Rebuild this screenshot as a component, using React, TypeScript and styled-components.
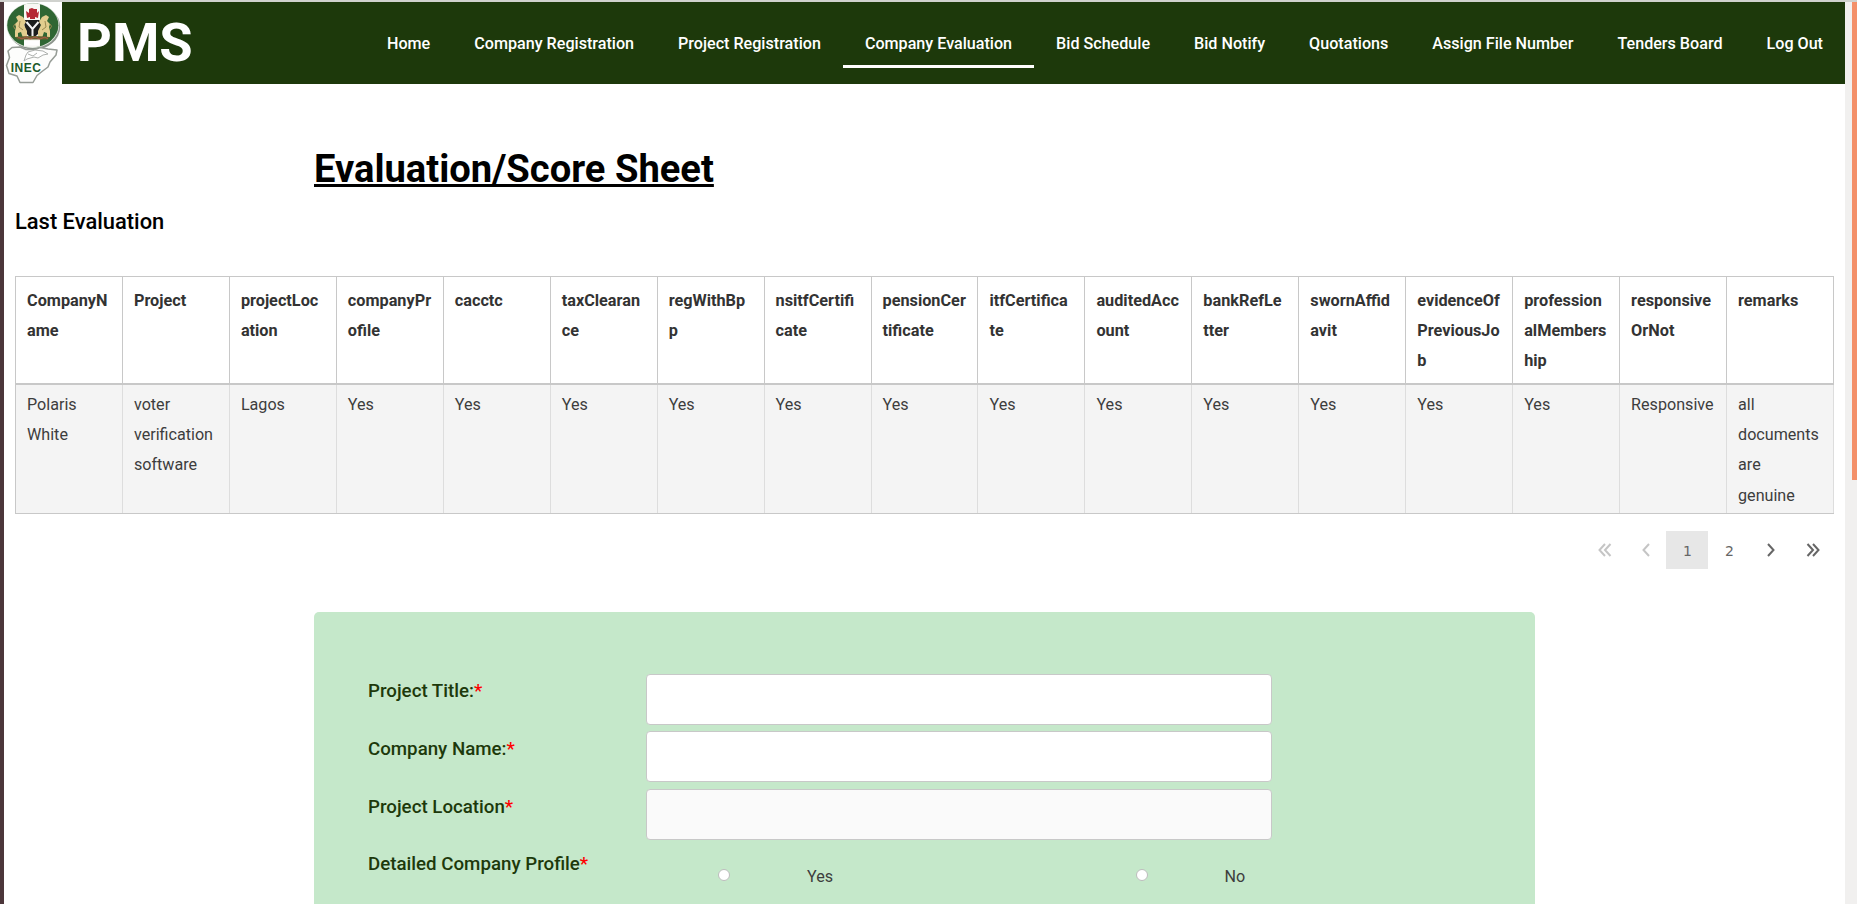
import React from "react";
import styled, { createGlobalStyle } from "styled-components";

const Global = createGlobalStyle`
  *, *::before, *::after { box-sizing: border-box; }
  body { margin: 0; background: #fff; overflow: hidden; font-family: Roboto, "Liberation Sans", sans-serif; font-size: 16.14px; color: #3d3d3d; }
`;

const Window = styled.div`
  display: flex;
  height: 904px;
  overflow: hidden;
  border-top: 2px solid #d0d2ce;
`;
const DesktopEdge = styled.div`
  flex: 0 0 4px;
  background: #4c363a;
`;
const Page = styled.div`
  flex: 1;
  min-width: 0;
  display: flex;
  flex-direction: column;
`;
const ScrollTrack = styled.div`
  flex: 0 0 12px;
  padding-left: 7px;
  background: #f1f0ef;
`;
const ScrollThumb = styled.div`
  height: 478px;
  background: #f39069;
`;

const Header = styled.header`
  display: flex;
  flex: 0 0 82px;
  background: #1d390b;
`;
const LogoBox = styled.div`
  width: 58px;
  background: #fff;
  svg { display: block; }
`;
const Brand = styled.div`
  padding-left: 15px;
  font-size: 54.2px;
  line-height: 81px;
  font-weight: 700;
  color: #fff;
`;
const Nav = styled.nav`
  display: flex;
  align-items: flex-start;
  margin-left: auto;
  padding-top: 18px;
`;
const NavItem = styled.a<{ $active?: boolean }>`
  height: 48px;
  padding: 0 22px;
  line-height: 47px;
  font-weight: 500;
  color: #fff;
  white-space: nowrap;
  border-bottom: 3px solid ${(p) => (p.$active ? "#fff" : "transparent")};
`;

const Title = styled.h1`
  margin: 61px 0 0 310px;
  font-size: 38.15px;
  line-height: 48px;
  font-weight: 700;
  color: #000;
  text-decoration: underline;
`;
const Subtitle = styled.h2`
  margin: 7px 0 0 11px;
  font-size: 21.9px;
  line-height: 44px;
  font-weight: 500;
  color: #000;
`;
const Table = styled.div`
  margin: 32px 11px 0;
  border: 1px solid #c8c8c8;
  border-right: 0;
`;
const HeadRow = styled.div`
  display: grid;
  grid-template-columns: repeat(17, minmax(0, 1fr));
  height: 108px;
  border-bottom: 2px solid #c8c8c8;
`;
const BodyRow = styled(HeadRow)`
  height: 128px;
  border-bottom: 0;
  background: #f4f4f4;
`;
const HeadCell = styled.div`
  padding: 9px 0 0 11px;
  font-size: 16.25px;
  line-height: 30.2px;
  font-weight: 700;
  color: #333;
  white-space: pre;
  border-right: 1px solid #c8c8c8;
`;
const Cell = styled.div`
  padding: 5px 0 0 11px;
  line-height: 30.2px;
  white-space: pre;
  border-right: 1px solid #dddddd;
`;

const Pager = styled.div`
  display: flex;
  height: 38px;
  margin: 17px 11px 0;
  justify-content: flex-end;
`;
const PageButton = styled.button<{ $active?: boolean; $muted?: boolean; $inset?: number }>`
  display: flex;
  align-items: center;
  justify-content: center;
  width: 42px;
  height: 38px;
  padding: 0 0 0 ${(p) => p.$inset ?? 0}px;
  border: 0;
  background: ${(p) => (p.$active ? "#e7e7e7" : "transparent")};
  color: ${(p) => (p.$muted ? "#c5c5c5" : "#666")};
`;
const PageNumber = styled.span`
  padding: 2px 0 0 1px;
  font: 14px "DejaVu Sans", sans-serif;
`;

const Form = styled.form`
  flex: 0 0 500px;
  width: 1221px;
  margin: 43px 0 0 310px;
  padding: 61.7px 54px 0;
  border-radius: 5px;
  background: #c5e8ca;
`;
const Field = styled.div`
  display: flex;
  height: 57.6px;
`;
const Label = styled.label`
  width: 278px;
  padding-top: 3.7px;
  font-size: 18.72px;
  line-height: 28px;
  font-weight: 500;
  color: #1d390b;
  white-space: nowrap;
`;
const Star = styled.span`
  color: #f00;
`;
const Input = styled.input`
  width: 626px;
  height: 51px;
  padding: 0 12px;
  border: 1px solid #c8c8c8;
  border-radius: 4px;
  background: #fff;
  &:disabled { background: #fafafa; }
`;
const Choice = styled.label`
  display: flex;
  width: 417.5px;
  padding-left: 72px;
  padding-top: 15.8px;
  line-height: 30px;
`;
const Radio = styled.span`
  width: 12px;
  height: 12px;
  margin: 7px 77px 0 0;
  border: 1px solid #bdbdbd;
  border-radius: 50%;
  background: #fff;
`;

const Logo = () => (
  <svg width="58" height="82" viewBox="4 2 58 82">
    <ellipse cx="34" cy="27" rx="26.2" ry="22.6" fill="#8c948c" />
    <ellipse cx="32.8" cy="25.4" rx="26.3" ry="22.6" fill="#dfe6de" />
    <ellipse cx="32.8" cy="25.2" rx="25.6" ry="21.9" fill="#2f6633" />
    <path d="M24 4.4Q32 2.4 40 4.2V46.4Q32 48 24 46.4Z" fill="#f8f8f4" />
    <path d="M27 18l-1-7 3 2 0-4 3-1 2 1 3 0 0 4 2-2-1 7-3-1v2h-5v-2Z" fill="#b52733" />
    <path d="M25 20h14l2 2-1 8q-2 6-8 8-5-2-7-8l-1-8Z" fill="#1c1e1d" />
    <path d="M26.5 22l6 7 6-7M32.5 28v9" fill="none" stroke="#f5f5f5" strokeWidth="2" />
    <path d="M16 17l3-2 4 2 3 5-2 3 3 6 0 7h-4l-2-6-3 1 0 4h-3l0-6 1-4-1-3 3-3Z" fill="#e2cd8e" />
    <path d="M49 17l-3-2-4 2-3 5 2 3-3 6 0 7h4l2-6 3 1 0 4h3l0-6-1-4 1-3-3-3Z" fill="#e2cd8e" />
    <path d="M15 29q-3-3 0-5M50 29q3-3 0-5M20 21l-1 6 4 3M45 21l1 6-4 3" fill="none" stroke="#9c8950" />
    <path d="M15 37q17-2 35 0l-3 2.5H18Z" fill="#67612f" />
    <path d="M18 37l4 2 4-2 4 2 5-2 5 2 5-2 3 2" fill="none" stroke="#ae5946" />
    <path d="M24 41h15v4.5H24Z" fill="#fff" />
    <path d="M8 51l4-3.5 8-.5 6 2.5h9l5-2 8 1.5 9 1-1 5-6 7-2 5-6 4.5-5 4-4 7H20l-3-6.5-8-2.5-2.5-8 3-8Z" fill="#fdfdfc" stroke="#969c96" strokeWidth="1.5" strokeLinejoin="round" />
    <path d="M24 61l2-6 2-3 7-2 8 1 5 3-5 1-5 3-4-1-7 2Z" fill="#fff" stroke="#adb0ad" />
    <path d="M28 54l5 2 4-3" fill="none" stroke="#adb0ad" />
    <text x="10.8" y="72" fill="#1c5a2a" fontFamily="Liberation Sans" fontSize="12" fontWeight="700" textLength="30" lengthAdjust="spacing">INEC</text>
  </svg>
);

const Chevron = ({ double, right }: { double?: boolean; right?: boolean }) => (
  <svg width="14" height="14" viewBox="0 0 14 14" fill="none" stroke="currentColor" strokeWidth="2" transform={right ? "scale(-1 1)" : undefined}>
    {double ? <path d="M7 1L1.5 7L7 13M12.5 1L7 7L12.5 13" /> : <path d="M10 1L4.5 7L10 13" />}
  </svg>
);

const links = ["Home", "Company Registration", "Project Registration", "Company Evaluation", "Bid Schedule", "Bid Notify", "Quotations", "Assign File Number", "Tenders Board", "Log Out"];
const columns = ["CompanyN\name", "Project", "projectLoc\nation", "companyPr\nofile", "cacctc", "taxClearan\nce", "regWithBp\np", "nsitfCertifi\ncate", "pensionCer\ntificate", "itfCertifica\nte", "auditedAcc\nount", "bankRefLe\ntter", "swornAffid\navit", "evidenceOf\nPreviousJo\nb", "profession\nalMembers\nhip", "responsive\nOrNot", "remarks"];
const values = ["Polaris\nWhite", "voter\nverification\nsoftware", "Lagos", ...Array(12).fill("Yes"), "Responsive", "all\ndocuments\nare\ngenuine"];
const fields = [{ label: "Project Title:" }, { label: "Company Name:" }, { label: "Project Location", disabled: true }];

export default function App() {
  return (
    <>
      <Global />
      <Window>
        <DesktopEdge />
        <Page>
          <Header>
            <LogoBox><Logo /></LogoBox>
            <Brand>PMS</Brand>
            <Nav>
              {links.map((l) => <NavItem key={l} $active={l === "Company Evaluation"}>{l}</NavItem>)}
            </Nav>
          </Header>
          <Title>Evaluation/Score Sheet</Title>
          <Subtitle>Last Evaluation</Subtitle>
          <Table>
            <HeadRow>{columns.map((c) => <HeadCell key={c}>{c}</HeadCell>)}</HeadRow>
            <BodyRow>{values.map((v, i) => <Cell key={i}>{v}</Cell>)}</BodyRow>
          </Table>
          <Pager>
            <PageButton $muted $inset={3} aria-label="First"><Chevron double /></PageButton>
            <PageButton $muted $inset={2} aria-label="Previous"><Chevron /></PageButton>
            <PageButton $active><PageNumber>1</PageNumber></PageButton>
            <PageButton><PageNumber>2</PageNumber></PageButton>
            <PageButton aria-label="Next"><Chevron right /></PageButton>
            <PageButton aria-label="Last"><Chevron double right /></PageButton>
          </Pager>
          <Form>
            {fields.map((f) => (
              <Field key={f.label}>
                <Label>{f.label}<Star>*</Star></Label>
                <Input disabled={f.disabled} />
              </Field>
            ))}
            <Field>
              <Label>Detailed Company Profile<Star>*</Star></Label>
              <Choice><Radio />Yes</Choice>
              <Choice><Radio />No</Choice>
            </Field>
          </Form>
        </Page>
        <ScrollTrack><ScrollThumb /></ScrollTrack>
      </Window>
    </>
  );
}
